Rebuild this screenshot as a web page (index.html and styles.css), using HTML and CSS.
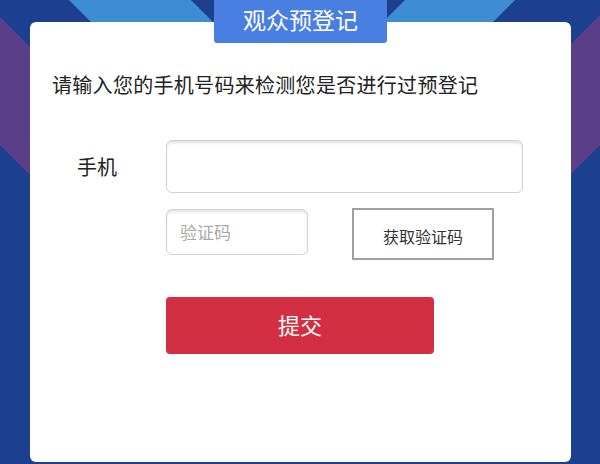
FILE: index.html
```html
<!DOCTYPE html>
<html lang="zh-CN">
<head>
    <meta charset="UTF-8">
    <meta name="viewport" content="width=device-width, initial-scale=1.0">
    <title>观众预登记</title>
    <link rel="stylesheet" href="styles.css">
</head>
<body>
    <svg class="backdrop" viewBox="0 0 600 464" preserveAspectRatio="none" aria-hidden="true">
        <rect width="600" height="464" fill="#1c3f8f"/>
        <polygon points="69,0 191,0 250,59 346,59 405,0 515,0 456,59 128,59" fill="#3d8dd2"/>
        <polygon points="0,17 40,57 40,185 0,145" fill="#5a3f88"/>
        <polygon points="600,15 560,55 560,185 600,145" fill="#5a3f88"/>
    </svg>

    <div class="page">
        <div class="tab">观众预登记</div>

        <div class="card">
            <p class="intro">请输入您的手机号码来检测您是否进行过预登记</p>

            <form class="form" onsubmit="return false;">
                <div class="row">
                    <label class="label" for="phone">手机</label>
                    <input class="field field-phone" id="phone" type="tel">
                </div>
                <div class="row">
                    <span class="label"></span>
                    <div class="code-group">
                        <input class="field field-code" type="text" placeholder="验证码">
                        <button class="btn-code" type="button">获取验证码</button>
                    </div>
                </div>
                <div class="row row-submit">
                    <span class="label"></span>
                    <button class="btn-submit" type="submit">提交</button>
                </div>
            </form>
        </div>
    </div>
</body>
</html>
```

FILE: styles.css
```css
* {
    box-sizing: border-box;
}
html, body {
    margin: 0;
    padding: 0;
}
body {
    width: 600px;
    height: 464px;
    overflow: hidden;
    position: relative;
    background-color: #1c3f8f;
    font-family: "Noto Sans CJK SC", "Noto Sans", sans-serif;
    color: #222;
}
.backdrop {
    position: absolute;
    top: 0;
    left: 0;
    width: 600px;
    height: 464px;
    z-index: 0;
}
.page {
    position: relative;
    z-index: 1;
    display: flex;
    flex-direction: column;
    align-items: center;
}
.tab {
    position: relative;
    z-index: 2;
    width: 173px;
    height: 43px;
    margin-left: 1px;
    margin-bottom: -21px;
    background-color: #4a7fe2;
    border-radius: 0 0 3px 3px;
    color: #fff;
    font-size: 23px;
    line-height: 39px;
    text-align: center;
}
.card {
    width: 541px;
    height: 440px;
    margin-left: 1px;
    background-color: #fff;
    border-radius: 6px;
    padding: 49px 0 0 22px;
}
.intro {
    margin: 0;
    font-size: 20px;
    line-height: 28px;
    letter-spacing: 0.3px;
    color: #222;
}
.form {
    margin-top: 41px;
    padding-left: 25px;
}
.row {
    display: flex;
    align-items: center;
}
.row + .row {
    margin-top: 15px;
    align-items: flex-start;
}
.row-submit {
    margin-top: 37px !important;
}
.label {
    width: 89px;
    flex-shrink: 0;
    font-size: 20px;
    color: #222;
}
.field {
    border: 1px solid #d2d2d2;
    border-radius: 6px;
    background: #fff;
    box-shadow: inset 0 3px 3px -1px rgba(0, 0, 0, 0.12);
    font-family: inherit;
    outline: none;
}
.field-phone {
    width: 357px;
    height: 53px;
}
.code-group {
    display: flex;
    align-items: flex-start;
    gap: 44px;
}
.field-code {
    width: 142px;
    height: 46px;
    margin-top: 1px;
    padding: 0 0 2px 13px;
    font-size: 17px;
}
.field-code::placeholder {
    color: #aaa;
}
.btn-code {
    width: 142px;
    height: 52px;
    border: 2px solid #a0a0a0;
    border-radius: 0;
    background: #fff;
    font-family: inherit;
    font-size: 16px;
    color: #333;
    padding: 4px 0 0 0;
}
.btn-submit {
    width: 268px;
    height: 57px;
    border: none;
    border-radius: 4px;
    background-color: #d32f42;
    color: #fff;
    font-family: inherit;
    font-size: 22px;
    padding: 0 0 4px 0;
}
```
